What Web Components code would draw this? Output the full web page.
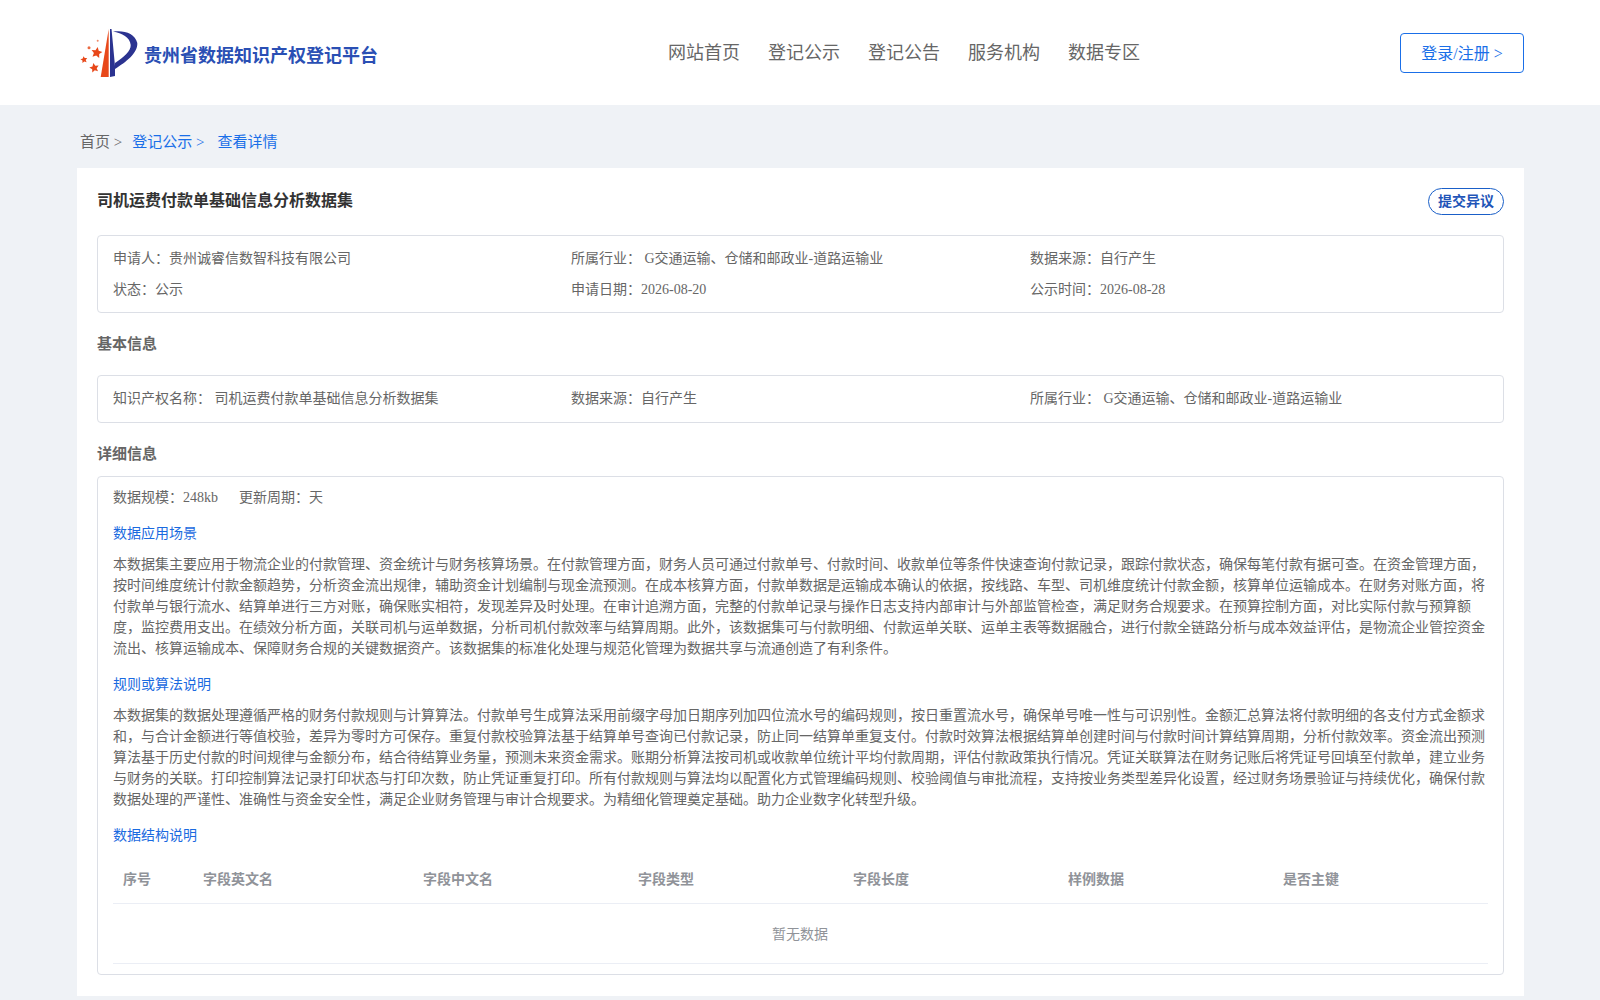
<!DOCTYPE html>
<html lang="zh-CN">
<head>
<meta charset="utf-8">
<title>贵州省数据知识产权登记平台</title>
<style>
  html, body { margin: 0; padding: 0; }
  body { background: #eff2f6; font-family: "Liberation Serif", "Noto Sans CJK JP", serif; font-size: 14px; color: #666; }
</style>
</head>
<body>
<site-header></site-header>
<bread-crumb></bread-crumb>
<detail-card>
  <div slot="title">司机运费付款单基础信息分析数据集</div>
  <info-box>
    <span>申请人：贵州诚睿信数智科技有限公司</span><span>所属行业： G交通运输、仓储和邮政业-道路运输业</span><span>数据来源：自行产生</span>
    <span>状态：公示</span><span>申请日期：2026-08-20</span><span>公示时间：2026-08-28</span>
  </info-box>
  <section-title>基本信息</section-title>
  <info-box single>
    <span>知识产权名称： 司机运费付款单基础信息分析数据集</span><span>数据来源：自行产生</span><span>所属行业： G交通运输、仓储和邮政业-道路运输业</span>
  </info-box>
  <section-title detail>详细信息</section-title>
  <detail-box>
    <div class="meta"><span>数据规模：248kb</span><span>更新周期：天</span></div>
    <detail-block heading="数据应用场景">本数据集主要应用于物流企业的付款管理、资金统计与财务核算场景。在付款管理方面，财务人员可通过付款单号、付款时间、收款单位等条件快速查询付款记录，跟踪付款状态，确保每笔付款有据可查。在资金管理方面，按时间维度统计付款金额趋势，分析资金流出规律，辅助资金计划编制与现金流预测。在成本核算方面，付款单数据是运输成本确认的依据，按线路、车型、司机维度统计付款金额，核算单位运输成本。在财务对账方面，将付款单与银行流水、结算单进行三方对账，确保账实相符，发现差异及时处理。在审计追溯方面，完整的付款单记录与操作日志支持内部审计与外部监管检查，满足财务合规要求。在预算控制方面，对比实际付款与预算额度，监控费用支出。在绩效分析方面，关联司机与运单数据，分析司机付款效率与结算周期。此外，该数据集可与付款明细、付款运单关联、运单主表等数据融合，进行付款全链路分析与成本效益评估，是物流企业管控资金流出、核算运输成本、保障财务合规的关键数据资产。该数据集的标准化处理与规范化管理为数据共享与流通创造了有利条件。</detail-block>
    <detail-block heading="规则或算法说明">本数据集的数据处理遵循严格的财务付款规则与计算算法。付款单号生成算法采用前缀字母加日期序列加四位流水号的编码规则，按日重置流水号，确保单号唯一性与可识别性。金额汇总算法将付款明细的各支付方式金额求和，与合计金额进行等值校验，差异为零时方可保存。重复付款校验算法基于结算单号查询已付款记录，防止同一结算单重复支付。付款时效算法根据结算单创建时间与付款时间计算结算周期，分析付款效率。资金流出预测算法基于历史付款的时间规律与金额分布，结合待结算业务量，预测未来资金需求。账期分析算法按司机或收款单位统计平均付款周期，评估付款政策执行情况。凭证关联算法在财务记账后将凭证号回填至付款单，建立业务与财务的关联。打印控制算法记录打印状态与打印次数，防止凭证重复打印。所有付款规则与算法均以配置化方式管理编码规则、校验阈值与审批流程，支持按业务类型差异化设置，经过财务场景验证与持续优化，确保付款数据处理的严谨性、准确性与资金安全性，满足企业财务管理与审计合规要求。为精细化管理奠定基础。助力企业数字化转型升级。</detail-block>
    <detail-block heading="数据结构说明"><field-table></field-table></detail-block>
  </detail-box>
</detail-card>

<script>
// five pointed star, returned as polygon points
function star(cx, cy, r, turn) {
  const pts = [];
  for (let i = 0; i < 10; i++) {
    const len = i % 2 ? r * 0.48 : r;
    const a = (turn + i * 36 - 90) * Math.PI / 180;
    pts.push((cx + len * Math.cos(a)).toFixed(1) + "," + (cy + len * Math.sin(a)).toFixed(1));
  }
  return pts.join(" ");
}

class SiteHeader extends HTMLElement {
  constructor() {
    super();
    this.attachShadow({ mode: "open" });
    this.shadowRoot.innerHTML = `
      <style>
        :host { display: flex; align-items: center; height: 105px; background: #fff; padding: 0 76px 0 80px; }
        .logo { display: flex; align-items: center; width: 588px; }
        .logo svg { width: 58px; height: 50px; margin-right: 6px; }
        .logo b { font: bold 18px "Liberation Sans", "Noto Sans CJK JP", sans-serif; color: #2a4fb4; position: relative; top: 1px; }
        nav { display: flex; gap: 28px; flex: 1; font-size: 18px; color: #666; margin-bottom: 4px; }
        a { display: block; width: 122px; height: 38px; line-height: 40px; border: 1px solid #1a6fe8; border-radius: 4px; text-align: center; font-size: 16px; color: #1a6fe8; }
      </style>
      <div class="logo">
        <svg viewBox="80 28 58 50">
          <path d="M108.7 29 L108.7 77 L100.7 77 Z" fill="#e8481a"/>
          <path d="M110 29 L111.5 29 L115 66 L115 76 L110 77 Z" fill="#2b3390"/>
          <path d="M113 31.5 C124 30 135 33 137.3 43 C138 53 126 62 115 69 L115 63 C124 57 131 51 130.7 45 C130 37 122 33.5 113 31.5 Z" fill="#2b3390"/>
          <polygon points="${star(96.7, 52.7, 5.8, 10)}" fill="#e8481a"/>
          <polygon points="${star(84, 59.7, 3.6, -10)}" fill="#e8481a"/>
          <polygon points="${star(94.3, 68, 5, -12)}" fill="#e8481a"/>
          <circle cx="89" cy="47.7" r="1.5" fill="#ea6a42"/>
          <circle cx="97.7" cy="40.7" r="1" fill="#ee8a6a"/>
        </svg>
        <b>贵州省数据知识产权登记平台</b>
      </div>
      <nav><span>网站首页</span><span>登记公示</span><span>登记公告</span><span>服务机构</span><span>数据专区</span></nav>
      <a>登录/注册 &gt;</a>`;
  }
}

class BreadCrumb extends HTMLElement {
  constructor() {
    super();
    this.attachShadow({ mode: "open" });
    this.shadowRoot.innerHTML = `
      <style>
        :host { display: flex; box-sizing: border-box; height: 63px; align-items: center; padding: 8px 0 0 80px; font-size: 15px; color: #666; }
        span { margin-right: 10px; }
        .on { color: #1a6fe8; }
        .last { margin-left: 3px; }
      </style>
      <span>首页 &gt;</span><span class="on">登记公示 &gt;</span><span class="on last">查看详情</span>`;
  }
}

class DetailCard extends HTMLElement {
  constructor() {
    super();
    this.attachShadow({ mode: "open" });
    this.shadowRoot.innerHTML = `
      <style>
        :host { display: block; margin: 0 76px 0 77px; background: #fff; padding: 20px 20px 21px; }
        .top { display: flex; justify-content: space-between; align-items: flex-start; height: 47px; }
        .title { font-size: 16px; font-weight: bold; color: #333; line-height: 26px; }
        button { width: 76px; height: 27px; padding: 0 0 3px; border: 1px solid #1a5fc8; border-radius: 14px; background: #fff; color: #1f55b8; font: bold 14px "Liberation Serif", "Noto Sans CJK JP", serif; }
      </style>
      <div class="top"><div class="title"><slot name="title"></slot></div><button>提交异议</button></div>
      <slot></slot>`;
  }
}

class InfoBox extends HTMLElement {
  constructor() {
    super();
    this.attachShadow({ mode: "open" });
    this.shadowRoot.innerHTML = `
      <style>
        :host { display: grid; grid-template-columns: 458px 459px 1fr; row-gap: 10px; border: 1px solid #dcdfe6; border-radius: 4px; padding: 12px 15px; line-height: 21px; }
        :host([single]) { padding: 12px 15px 13px; }
      </style>
      <slot></slot>`;
  }
}

class SectionTitle extends HTMLElement {
  constructor() {
    super();
    this.attachShadow({ mode: "open" });
    this.shadowRoot.innerHTML = `
      <style>
        :host { display: block; font-size: 15px; font-weight: bold; color: #666; line-height: 21px; padding: 21px 0 20px; }
        :host([detail]) { padding: 21px 0 11px; }
      </style>
      <slot></slot>`;
  }
}

class DetailBox extends HTMLElement {
  constructor() {
    super();
    this.attachShadow({ mode: "open" });
    this.shadowRoot.innerHTML = `
      <style>
        :host { display: block; border: 1px solid #dcdfe6; border-radius: 4px; padding: 10px 15px; }
        ::slotted(.meta) { display: flex; gap: 21px; line-height: 21px; }
      </style>
      <slot></slot>`;
  }
}

class DetailBlock extends HTMLElement {
  constructor() {
    super();
    this.attachShadow({ mode: "open" });
    this.shadowRoot.innerHTML = `
      <style>
        :host { display: block; }
        h4 { margin: 15px 0 10px; font-size: 14px; font-weight: normal; color: #1a6ae0; line-height: 21px; }
        div { line-height: 21px; }
      </style>
      <h4></h4><div><slot></slot></div>`;
    this.shadowRoot.querySelector("h4").textContent = this.getAttribute("heading");
  }
}

class FieldTable extends HTMLElement {
  constructor() {
    super();
    this.attachShadow({ mode: "open" });
    const cols = ["序号", "字段英文名", "字段中文名", "字段类型", "字段长度", "样例数据", "是否主键"];
    this.shadowRoot.innerHTML = `
      <style>
        :host { display: block; color: #909399; margin-top: -3px; }
        .head { display: grid; grid-template-columns: 80px 220px repeat(5, 1fr); height: 50px; align-items: center; border-bottom: 1px solid #ebeef5; font-weight: bold; }
        .head span { padding: 2px 0 0 10px; }
        .empty { height: 59px; line-height: 61px; text-align: center; border-bottom: 1px solid #ebeef5; padding-right: 1px; }
      </style>
      <div class="head">${cols.map(c => `<span>${c}</span>`).join("")}</div>
      <div class="empty">暂无数据</div>`;
  }
}

customElements.define("site-header", SiteHeader);
customElements.define("bread-crumb", BreadCrumb);
customElements.define("detail-card", DetailCard);
customElements.define("info-box", InfoBox);
customElements.define("section-title", SectionTitle);
customElements.define("detail-box", DetailBox);
customElements.define("detail-block", DetailBlock);
customElements.define("field-table", FieldTable);
</script>
</body>
</html>
